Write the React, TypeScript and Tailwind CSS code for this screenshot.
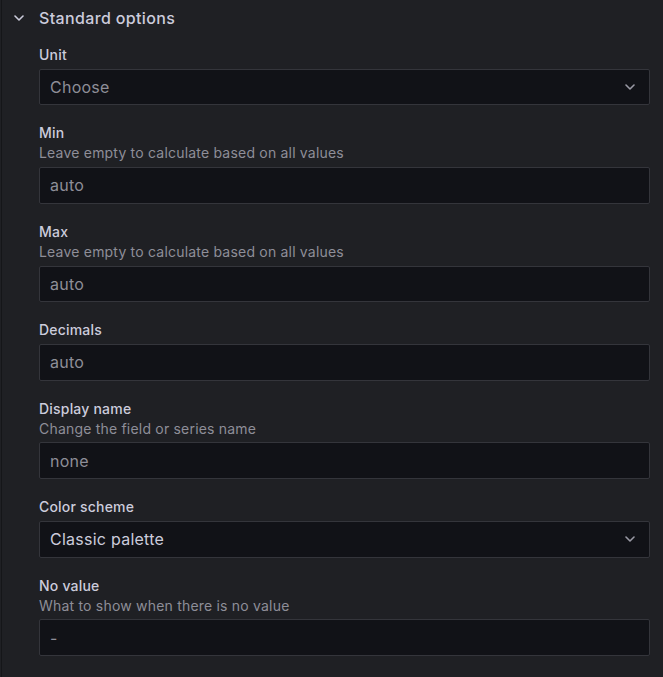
import React from "react";

const Chevron = ({ className }: { className?: string }) => (
  <svg className={className} width="10" height="6" viewBox="0 0 10 6" fill="none">
    <path d="M1 1L5 5L9 1" stroke="currentColor" strokeWidth="1.6" strokeLinecap="round" strokeLinejoin="round" />
  </svg>
);

type FieldProps = {
  label: string;
  description?: string;
  value: string;
  placeholder?: boolean;
  select?: boolean;
};

const Field = ({ label, description, value, placeholder = true, select = false }: FieldProps) => (
  <div className="mb-[18.2px] flex flex-col">
    <div className="text-[14px] leading-[20px] font-medium tracking-[0.2px] text-[#ccccdc]">{label}</div>
    {description && (
      <div className="text-[14px] leading-[20px] tracking-[0.2px] text-[#8e8e98]">{description}</div>
    )}
    <div className="mt-[3.7px] flex h-[36.6px] items-center justify-between rounded-[2px] border border-[#34353b] bg-[#111217] pl-[10px] pr-[14px]">
      <span className={`text-[16px] tracking-[0.25px] ${placeholder ? "text-[#8e8e98]" : "text-[#ccccdc]"}`}>
        {value}
      </span>
      {select && <Chevron className="text-[#9a9aa5]" />}
    </div>
  </div>
);

export default function App() {
  return (
    <div
      className="h-[677px] w-[663px] overflow-hidden bg-[#1f2024] pl-px"
      style={{ fontFamily: "Inter, 'Noto Sans', sans-serif" }}
    >
      <div className="h-full border-l border-[#151619]">
        <div className="flex h-[36px] items-center">
          <div className="flex w-[37px] justify-start pl-[12px]">
            <Chevron className="text-[#ccccdc]" />
          </div>
          <span className="text-[16px] font-medium tracking-[0.35px] text-[#ccccdc]">Standard options</span>
        </div>
        <div className="pl-[37px] pr-[13px] pt-[8.9px]">
          <Field label="Unit" value="Choose" select />
          <Field label="Min" description="Leave empty to calculate based on all values" value="auto" />
          <Field label="Max" description="Leave empty to calculate based on all values" value="auto" />
          <Field label="Decimals" value="auto" />
          <Field label="Display name" description="Change the field or series name" value="none" />
          <Field label="Color scheme" value="Classic palette" placeholder={false} select />
          <Field label="No value" description="What to show when there is no value" value="-" />
        </div>
      </div>
    </div>
  );
}
